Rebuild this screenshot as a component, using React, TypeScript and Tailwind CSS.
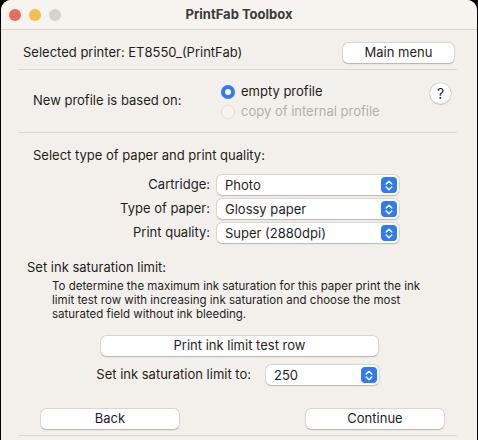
import React from "react";

const font = { fontFamily: "Inter, 'Noto Sans', sans-serif" };

function Chevrons() {
  return (
    <div className="w-[16px] h-[16px] rounded-[4px] bg-[#2f7bf5] flex items-center justify-center">
      <svg width="8" height="11" viewBox="0 0 8 11" fill="none">
        <path d="M1.2 4 L4 1.3 L6.8 4" stroke="white" strokeWidth="1.5" strokeLinecap="round" strokeLinejoin="round" />
        <path d="M1.2 7 L4 9.7 L6.8 7" stroke="white" strokeWidth="1.5" strokeLinecap="round" strokeLinejoin="round" />
      </svg>
    </div>
  );
}

function Select({ value, w }: { value: string; w: string }) {
  return (
    <div
      className={`${w} h-[20px] bg-white rounded-[5px] flex items-center justify-between pl-[8px] pr-[2px] shadow-[0_0_0_0.5px_rgba(0,0,0,0.15),0_0.5px_1.5px_rgba(0,0,0,0.18)]`}
    >
      <span className="text-[13px] text-[#1e1e1e] leading-none">{value}</span>
      <Chevrons />
    </div>
  );
}

function Button({ label, w }: { label: string; w: string }) {
  return (
    <div
      className={`${w} h-[20px] bg-white rounded-[5px] flex items-center justify-center text-[13px] text-[#1e1e1e] shadow-[0_0_0_0.5px_rgba(0,0,0,0.15),0_0.5px_1.5px_rgba(0,0,0,0.2)]`}
    >
      {label}
    </div>
  );
}

export default function App() {
  return (
    <div className="w-[478px] h-[440px] bg-black overflow-hidden" style={font}>
      <div className="ml-[1px] w-[476px] h-[440px] bg-[#f3f0eb] rounded-t-[10px] overflow-hidden">
        {/* Title bar */}
        <div className="h-[30px] bg-[#f7f4ef] border-b border-[#d8d5d0] flex items-center">
          <div className="flex items-center gap-[8px] pl-[8px]">
            <div className="w-[12px] h-[12px] rounded-full bg-[#ed6a5e]" />
            <div className="w-[12px] h-[12px] rounded-full bg-[#f5be4f]" />
            <div className="w-[12px] h-[12px] rounded-full bg-[#d6d3cf]" />
          </div>
          <div className="flex-1 text-center text-[13px] font-bold text-[#3a3a3a] pr-[60px]">PrintFab Toolbox</div>
        </div>

        <div className="ml-[18px] w-[438px]">
          {/* Row 1 */}
          <div className="h-[40px] flex items-center justify-between pt-[6px] border-b border-[#d9d6d1]">
            <span className="pl-[4px] text-[13px] text-[#1e1e1e]">Selected printer: ET8550_(PrintFab)</span>
            <Button label="Main menu" w="w-[111px] mr-[3px]" />
          </div>

          {/* Row 2 */}
          <div className="h-[63px] flex items-center border-b border-[#d9d6d1]">
            <span className="pl-[14px] w-[202px] text-[13px] text-[#1e1e1e]">New profile is based on:</span>
            <div className="flex flex-col mt-[2px]">
              <div className="h-[20px] flex items-center gap-[6px]">
                <div className="w-[14px] h-[14px] rounded-full bg-[#2f7bf5] flex items-center justify-center">
                  <div className="w-[6px] h-[6px] rounded-full bg-white" />
                </div>
                <span className="text-[13px] text-[#1e1e1e]">empty profile</span>
              </div>
              <div className="h-[20px] flex items-center gap-[6px]">
                <div className="w-[14px] h-[14px] rounded-full bg-[#f7f5f1] border border-[#e2dfda]" />
                <span className="text-[13px] text-[#b3b0ac]">copy of internal profile</span>
              </div>
            </div>
            <div className="flex-1" />
            <div className="w-[21px] h-[21px] mr-[6px] -mt-[15px] rounded-full bg-white flex items-center justify-center text-[14px] text-[#1e1e1e] shadow-[0_0_0_0.5px_rgba(0,0,0,0.15),0_0.5px_1.5px_rgba(0,0,0,0.2)]">
              ?
            </div>
          </div>

          {/* Paper section */}
          <div className="pl-[14px] pt-[14px] text-[13px] text-[#1e1e1e] leading-[16px]">Select type of paper and print quality:</div>
          <div className="mt-[12px] flex flex-col gap-[4px]">
            {[
              ["Cartridge:", "Photo"],
              ["Type of paper:", "Glossy paper"],
              ["Print quality:", "Super (2880dpi)"],
            ].map(([l, v]) => (
              <div key={l} className="flex items-center h-[20px]">
                <span className="w-[191px] text-right text-[13px] text-[#1e1e1e]">{l}</span>
                <div className="ml-[7px]">
                  <Select value={v} w="w-[182px]" />
                </div>
              </div>
            ))}
          </div>

          {/* Ink */}
          <div className="pl-[8px] mt-[16px] text-[13px] text-[#1e1e1e] leading-[16px]">Set ink saturation limit:</div>
          <div className="ml-[33px] w-[374px] mt-[4px] text-[11.5px] leading-[14px] text-[#1e1e1e]">
            To determine the maximum ink saturation for this paper print the ink limit test row with increasing ink saturation and choose the most saturated field without ink bleeding.
          </div>
          <div className="mt-[15px] pl-[82px]">
            <Button label="Print ink limit test row" w="w-[277px]" />
          </div>
          <div className="mt-[9px] flex items-center h-[20px]">
            <span className="w-[232px] text-right text-[13px] text-[#1e1e1e]">Set ink saturation limit to:</span>
            <div className="ml-[15px]">
              <Select value="250" w="w-[113px]" />
            </div>
          </div>

          <div className="mt-[24px] flex items-center pb-[6px] border-b border-[#d9d6d1]">
            <div className="ml-[22px]">
              <Button label="Back" w="w-[138px]" />
            </div>
            <div className="ml-[127px]">
              <Button label="Continue" w="w-[138px]" />
            </div>
          </div>
        </div>
      </div>
    </div>
  );
}
